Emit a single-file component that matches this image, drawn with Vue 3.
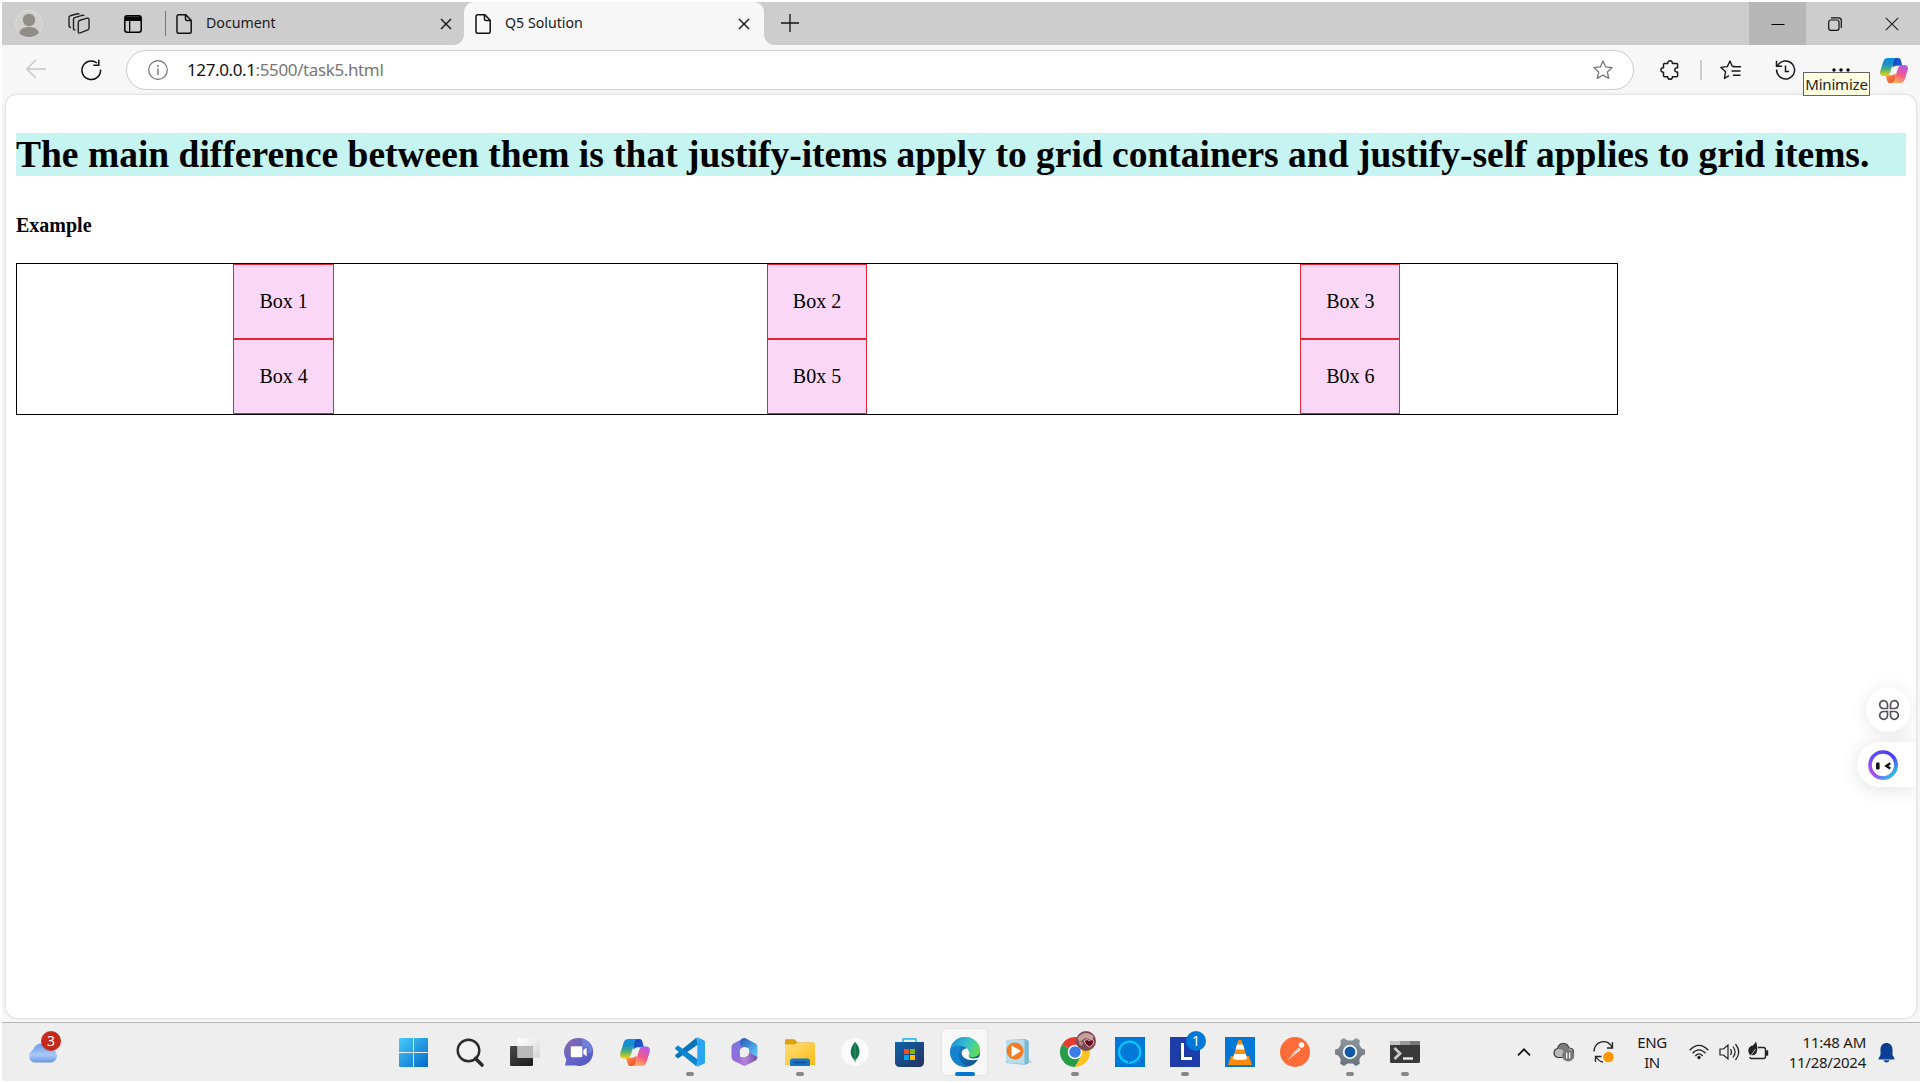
<script setup>
const boxes = ['Box 1', 'Box 2', 'Box 3', 'Box 4', 'B0x 5', 'B0x 6']
</script>

<template>
  <div class="screen">
    <svg class="defs" width="0" height="0" aria-hidden="true">
      <defs>
        <linearGradient id="cp-a" x1="0" y1="0" x2="0" y2="1">
          <stop offset="0" stop-color="#0d91e1" /><stop offset=".35" stop-color="#1b8fc9" /><stop offset=".65" stop-color="#52b471" /><stop offset="1" stop-color="#ffd000" />
        </linearGradient>
        <linearGradient id="cp-b" x1=".7" y1="0" x2=".3" y2="1">
          <stop offset="0" stop-color="#b45ae8" /><stop offset=".5" stop-color="#f2588d" /><stop offset="1" stop-color="#ffb357" />
        </linearGradient>
        <linearGradient id="cp-c" x1="0" y1="0" x2="1" y2="1">
          <stop offset="0" stop-color="#1b3fb5" /><stop offset="1" stop-color="#1668e0" />
        </linearGradient>
        <linearGradient id="cp-d" x1="0" y1="0" x2="1" y2="1">
          <stop offset="0" stop-color="#f9a13a" /><stop offset="1" stop-color="#ee3f3f" />
        </linearGradient>
        <symbol id="copilot" viewBox="0 0 30 27">
          <path d="M13 0h6.500c1.500 0 2.300.8 2.700 2.300L24 8.300h-5.500c-2.200 0-3.600.6-5 2.200z" fill="url(#cp-c)" />
          <path d="M17 27h-6.500c-1.500 0-2.300-.8-2.700-2.300L6 18.700h5.500c2.200 0 3.600-.6 5-2.200z" fill="url(#cp-d)" />
          <path d="M8.500 0H18c-2 .2-2.800 1.800-3.400 3.800L11 15.200c-.8 2.400-2 4.300-4.700 4.300H3.600C.6 19.500-.4 17 .3 14L3.700 3.500C4.500 1 6 0 8.500 0z" fill="url(#cp-a)" />
          <path d="M21.500 27H12c2-.2 2.800-1.800 3.400-3.800L19 11.800c.8-2.400 2-4.300 4.700-4.300h2.700c3 0 4 2.500 3.300 5.500L26.300 23.500C25.500 26 24 27 21.500 27z" fill="url(#cp-b)" />
        </symbol>
        <symbol id="doc" viewBox="0 0 16 20">
          <path d="M2.500.8h7.300l5.400 5.500v11.400a1.500 1.500 0 0 1-1.500 1.500H2.500A1.500 1.500 0 0 1 1 17.700V2.300A1.500 1.500 0 0 1 2.500.8zM9.500 1v4.200a1.300 1.300 0 0 0 1.300 1.300H15" fill="none" stroke="#111" stroke-width="1.500" />
        </symbol>
        <symbol id="cross" viewBox="0 0 12 12">
          <path d="M1 1l10 10M11 1L1 11" stroke="#111" stroke-width="1.400" />
        </symbol>
        <linearGradient id="win" gradientUnits="userSpaceOnUse" x1="0" y1="0" x2="29" y2="29"><stop offset="0" stop-color="#48cdfb" /><stop offset="1" stop-color="#0268c7" /></linearGradient>
        <linearGradient id="dark" x1="0" y1="0" x2="1" y2="1"><stop offset="0" stop-color="#484848" /><stop offset="1" stop-color="#1b1b1b" /></linearGradient>
        <linearGradient id="pale" x1="0" y1="0" x2="1" y2="1"><stop offset="0" stop-color="#fff" /><stop offset="1" stop-color="#d5d5d5" /></linearGradient>
        <linearGradient id="chat" x1="0" y1="0" x2="1" y2="1"><stop offset="0" stop-color="#8f6aa8" /><stop offset=".5" stop-color="#6264c7" /><stop offset="1" stop-color="#5558c8" /></linearGradient>
        <linearGradient id="off-a" x1="0" y1="1" x2="1" y2="0"><stop offset="0" stop-color="#9a68d8" /><stop offset="1" stop-color="#6a7fe0" /></linearGradient>
        <linearGradient id="off-b" x1="0" y1="0" x2="1" y2="1"><stop offset="0" stop-color="#2b54b8" /><stop offset="1" stop-color="#62d5ff" /></linearGradient>
        <linearGradient id="off-c" x1="0" y1="0" x2="1" y2="0"><stop offset="0" stop-color="#8a60cc" /><stop offset=".5" stop-color="#b484dc" /><stop offset="1" stop-color="#6c4aa3" /></linearGradient>
        <linearGradient id="folder" x1="0" y1="0" x2="1" y2="1"><stop offset="0" stop-color="#ffe07a" /><stop offset="1" stop-color="#fbb917" /></linearGradient>
        <linearGradient id="store" x1="0" y1="0" x2="1" y2="1"><stop offset="0" stop-color="#0f65ad" /><stop offset="1" stop-color="#272f5c" /></linearGradient>
        <linearGradient id="edge-top" x1="0" y1=".3" x2="1" y2=".6"><stop offset="0" stop-color="#1a8fd8" /><stop offset=".5" stop-color="#35bfd0" /><stop offset="1" stop-color="#62df4f" /></linearGradient>
        <linearGradient id="edge-low" x1="0" y1="0" x2="1" y2="1"><stop offset="0" stop-color="#1b92dc" /><stop offset="1" stop-color="#114a8b" /></linearGradient>
        <linearGradient id="gear" x1="0" y1="0" x2="0" y2="1"><stop offset="0" stop-color="#8f979d" /><stop offset="1" stop-color="#68727b" /></linearGradient>
        <linearGradient id="cloud" x1="0" y1="0" x2="0" y2="1"><stop offset="0" stop-color="#6f9ce8" /><stop offset=".6" stop-color="#a9c9f8" /><stop offset="1" stop-color="#6b95e4" /></linearGradient>
        <linearGradient id="ring" x1="1" y1="0" x2="0" y2="1"><stop offset="0" stop-color="#4a35f0" /><stop offset=".5" stop-color="#5b50ff" /><stop offset="1" stop-color="#c04be8" /></linearGradient>
        <linearGradient id="ring2" x1="0" y1="0" x2="1" y2="1"><stop offset=".55" stop-color="#2bc4e8" stop-opacity="0" /><stop offset=".9" stop-color="#26c0e6" /></linearGradient>
      </defs>
    </svg>

    <header class="tabs">
      <div class="slot avatar">
        <svg width="28" height="28" viewBox="0 0 28 28"><circle cx="14" cy="14" r="13.500" fill="#d2d0cd" stroke="#dedcd8" /><circle cx="14" cy="10" r="6.200" fill="#918d89" /><path d="M4 23c1-4 5-6 10-6s9 2 10 6c-5 5.500-15 5.500-20 0z" fill="#918d89" /></svg>
      </div>
      <div class="slot workspaces">
        <svg width="22" height="22" viewBox="0 0 22 22" fill="none" stroke="#222" stroke-width="1.400" stroke-linejoin="round"><path d="M11.500 7.500l7.500-2.300q2-.5 2 1.500v8.500q0 1.200-1.200 1.700l-7.500 3q-2 .7-2-1.200v-9.300q0-1.400 1.200-1.900z" /><path d="M7.500 17l-1-.1q-1-.2-1-1.200V6.300q0-1.300 1.200-1.700L14 2.300q1.500-.4 2 .8" /><path d="M3 14.500l-1-.2q-1-.2-1-1.200V4.500Q1 3.200 2.200 2.800L9.500.8q1.300-.3 1.800.6" /></svg>
      </div>
      <div class="slot vertical-tabs">
        <svg width="18" height="18" viewBox="0 0 18 18"><rect x=".8" y=".8" width="16.400" height="16.400" rx="2.500" fill="none" stroke="#000" stroke-width="1.500" /><path d="M1 1.500h16V6H1zM5 6h1.300v11H5z" /></svg>
      </div>
      <i class="rule"></i>
      <div class="tab">
        <svg width="16" height="20"><use href="#doc" /></svg><span class="t1">Document</span><svg class="x" width="12" height="12"><use href="#cross" /></svg>
      </div>
      <div class="tab active">
        <svg width="16" height="20"><use href="#doc" /></svg><span class="t2">Q5 Solution</span><svg class="x" width="12" height="12"><use href="#cross" /></svg>
      </div>
      <svg class="plus" width="18" height="18" viewBox="0 0 18 18"><path d="M9 0v18M0 9h18" stroke="#111" stroke-width="1.300" /></svg>
      <div class="win-buttons">
        <div class="min"><svg width="14" height="14"><path d="M.5 7.500h13" stroke="#000" /></svg></div>
        <div><svg width="14" height="14" fill="none" stroke="#111" stroke-width="1.200"><rect x=".7" y="3" width="10.300" height="10.300" rx="2" /><path d="M3 .8h7.500q2.800 0 2.800 2.700v7.500" /></svg></div>
        <div><svg width="14" height="14"><path d="M.8.8l12.400 12.400M13.200.8L.8 13.200" stroke="#222" stroke-width="1.200" /></svg></div>
      </div>
    </header>

    <div class="toolbar">
      <svg class="back" width="20" height="20" fill="none" stroke="#c6c6c6" stroke-width="1.400"><path d="M20 10H1M10 .8L.9 10l9.100 9.200" /></svg>
      <svg class="reload" width="22" height="22" viewBox="0 0 22 22" fill="none" stroke="#111" stroke-width="1.500"><path d="M20.500 10.500A9.300 9.300 0 1 1 17 4M18.800.8v5.500h-5.500" /></svg>
      <div class="address">
        <svg width="20" height="20"><circle cx="10" cy="10" r="9.300" fill="none" stroke="#707070" stroke-width="1.200" /><path d="M10 8.500v6.500" stroke="#666" stroke-width="1.300" /><circle cx="10" cy="6" r=".9" fill="#666" /></svg>
        <span class="url">127.0.0.1<em>:5500/task5.html</em></span>
        <svg class="star" width="20" height="20" viewBox="0 0 20 20"><path d="M10 1l2.700 5.900 6.400.7-4.800 4.300 1.400 6.500L10 15.100l-5.700 3.300 1.400-6.500L.9 7.600l6.400-.7z" fill="none" stroke="#777" stroke-width="1.300" stroke-linejoin="round" /></svg>
      </div>
      <svg class="puzzle" width="20" height="20" viewBox="0 0 20 20" fill="none" stroke="#1a1a1a" stroke-width="1.500" stroke-linejoin="round"><path d="M4.500 3.500h3.200c-.3-3.600 5-3.600 4.700 0h4.200q1 0 1 1v3.300c-3.700-.6-3.700 4.800 0 4.300v3.600q0 1-1 1h-4.200c.3 3.400-5 3.400-4.700 0H4.500q-1 0-1-1v-3.500c-3.500.3-3.500-4.800 0-4.400V4.500q0-1 1-1z" /></svg>
      <i class="rule2"></i>
      <svg class="favs" width="21" height="20" viewBox="0 0 21 20" fill="none" stroke="#1a1a1a" stroke-width="1.400" stroke-linejoin="round"><path d="M16 6.800l-3.800-.6L10 1 7.300 6.600l-6.400.8 4.700 4.300-1.200 6.600L9 15.700M13 6.800h8M11.500 11h9M13 15.200h7.500" /></svg>
      <svg class="history" width="21" height="20" viewBox="0 0 21 20" fill="none" stroke="#1a1a1a" stroke-width="1.500"><path d="M2.500 6A9 9 0 1 1 1.600 9.500M1.500.8v5.500H7M10.500 5.500v6H14" /></svg>
      <svg class="dots" width="18" height="4"><circle cx="2" cy="2" r="1.700" /><circle cx="9" cy="2" r="1.700" /><circle cx="16" cy="2" r="1.700" /></svg>
      <svg class="copilot" width="28" height="27"><use href="#copilot" /></svg>
      <div class="tooltip"><span>Minimize</span></div>
    </div>

    <div class="view">
      <main class="page">
        <h1><span>The main difference between them is that justify-items apply to grid containers and justify-self applies to grid items.</span></h1>
        <h4>Example</h4>
        <section class="grid"><div v-for="b in boxes" :key="b" class="box">{{ b }}</div></section>
        <div class="float-round">
          <svg width="20" height="20" fill="none" stroke="#55505c" stroke-width="1.700"><path d="M8.500 8.500H5A3.900 3.900 0 1 1 8.500 5zM11.500 8.500V5A3.900 3.900 0 1 1 15 8.500zM8.500 11.500V15A3.900 3.900 0 1 1 5 11.500zM11.500 11.500H15a3.900 3.900 0 1 1-3.500 3.500z" /></svg>
        </div>
        <div class="float-pill">
          <svg width="30" height="30" fill="none"><circle cx="15" cy="15" r="13" stroke="url(#ring)" stroke-width="3.600" /><circle cx="15" cy="15" r="13" stroke="url(#ring2)" stroke-width="3.600" /><rect x="8" y="12.500" width="3.600" height="7" rx="1.200" fill="#111" /><path d="M22.300 13.300l-4 2.700 4 2.500" stroke="#111" stroke-width="2.300" /></svg>
        </div>
      </main>
    </div>

    <footer class="taskbar">
      <div class="weather">
        <svg width="31" height="20" viewBox="0 0 31 20"><path d="M7 19.500a6.500 6.500 0 0 1-1-12.200C8-1 19-2 22 6c9-1 11.500 12 2 13.500z" fill="url(#cloud)" /><path d="M5 8c3-2 7-1.500 10 1.500 2-2 4-3.300 7-3.500" fill="none" stroke="#86aeee" stroke-width="1" /></svg>
        <b>3</b>
      </div>
      <nav class="apps">
        <div class="app first"><svg width="29" height="29"><path d="M0 1q0-1 1-1h13v14H0zM15 0h13q1 0 1 1v13H15zM0 15h14v14H1q-1 0-1-1zM15 15h14v13q0 1-1 1H15z" fill="url(#win)" /></svg></div>
        <div class="app"><svg width="28" height="29" fill="none" stroke="#2b2b2b"><circle cx="12.500" cy="12.500" r="10.800" fill="#f1f1f1" stroke-width="2.400" /><path d="M19.500 20.500l6.500 6.500" stroke-width="3.600" stroke-linecap="round" /></svg></div>
        <div class="app"><svg width="30" height="28"><rect y="8" width="23" height="20" rx="1.200" fill="url(#dark)" /><rect x="7.500" width="22.500" height="20" rx="1" fill="url(#pale)" /><path d="M7.500 8H23v12H7.500z" fill="#b9b9b9" /></svg></div>
        <div class="app"><svg class="nudge" width="29" height="28" viewBox="0 0 30 29"><path d="M15 0A14.500 14.500 0 1 1 12 28.500L1 28.500l1.400-6.200A14.500 14.500 0 0 1 15 0z" fill="url(#chat)" /><path d="M19 .6a14.500 14.500 0 0 1 10.500 13.200L25 16V9.500h-6z" fill="#7697ed" opacity=".6" /><rect x="7" y="8.500" width="12" height="11.500" rx="1" fill="#fff" /><path d="M20 12.500l3.500-2.600v9L20 16.500z" fill="#fff" /></svg></div>
        <div class="app"><svg width="30" height="27"><use href="#copilot" /></svg></div>
        <div class="app run"><svg width="30" height="30" viewBox="0 0 30 30"><path d="M3 21.500L.5 19.400q-.8-.8 0-1.600L21.500.5l1.500 7z" fill="#0873bb" /><path d="M3 8.500L.5 10.600q-.8.800 0 1.600L21.500 29.500l1.500-7z" fill="#0b86d0" /><path d="M22.300.2L29 3.200q1 .5 1 1.600v20.400q0 1.100-1 1.600l-6.700 3z" fill="#29a6f2" /></svg></div>
        <div class="app"><svg width="27" height="28" viewBox="0 0 27 28"><path d="M15 .3Q13.500-.4 12 .4L2.500 5.500Q.5 6.700.5 9v10q0 2.300 2 3.500l2.500 1.300L9 20v-8l6-4z" fill="url(#off-a)" /><path d="M14 0L24.500 5.500Q26.500 6.700 26.500 9v10.500L18 15v-4.500L9 7.500 9.500 3q.5-3 4.500-3z" fill="url(#off-b)" /><path d="M2.500 22.500l6.500-3.700 4.500.7 4.500-5.500 8.500 5q0 2.300-2 3.500L15 27.600q-1.500.8-3 0z" fill="url(#off-c)" /><circle cx="13.500" cy="14" r="4.800" fill="#eee" /></svg></div>
        <div class="app run"><svg width="30" height="27" viewBox="0 0 30 27"><path d="M0 1.500Q0 .3 1.200.3h8.500l3 3.200H29L28 8H0z" fill="#dda00f" /><path d="M0 5.500h9.500l3-1.800h16.500q1 0 1 1V26H0z" fill="url(#folder)" /><path d="M5 27v-5q0-2.500 2.500-2.500h15Q25 19.500 25 22v5z" fill="#1376c8" /><path d="M8.500 23.500h13" stroke="#0b4a8c" stroke-width="1.300" /></svg></div>
        <div class="app"><svg width="28" height="28"><circle cx="14" cy="14" r="13.800" fill="#fbfbfb" /><path d="M14 4c7 7 5 14 0 18.500C8.500 18 8 11 14 4z" fill="#10734b" /><path d="M14 4v20" stroke="#3c9167" /></svg></div>
        <div class="app"><svg width="29" height="29" viewBox="0 0 29 29"><path d="M8 6V1.500Q8 .8 8.700.8h11.600q.7 0 .7.700V6" fill="none" stroke="#35b8ee" stroke-width="1.700" /><path d="M0 4h29v20.500a4.500 4.500 0 0 1-4.500 4.500h-20A4.500 4.500 0 0 1 0 24.500z" fill="url(#store)" /><path d="M9 11h5v5H9z" fill="#f25022" /><path d="M15 11h5v5h-5z" fill="#7fba00" /><path d="M9 17h5v5H9z" fill="#00a4ef" /><path d="M15 17h5v5h-5z" fill="#ffb900" /></svg></div>
        <div class="app on"><svg width="30" height="30" viewBox="0 0 30 30"><circle cx="15" cy="15" r="15" fill="url(#edge-low)" /><path d="M.2 13C1.500 5 7.500 0 15 0c9 0 15 6.500 15 13 0 5-3.500 7.300-7.500 7.300-3 0-5.500-1-4-3.300 1.500-3-1-6.500-5-7.500C8.500 8 2.500 9 .2 13z" fill="url(#edge-top)" /><path d="M12 10.500c-6 5.500-3.500 15 5 19C9 30.500 2 25.500.5 17 1 10 7.500 8 12 10.500z" fill="#1683d2" /><path d="M17.500 11.500c-3.500-.5-6 2-5.700 5 .5 5.500 8 8.500 18.500 5.500v-2.500c-4 2.500-11.800 2.800-11.600-.8 0-1.200 1-1.800.7-3.500z" fill="#f7f7f7" /></svg></div>
        <div class="app"><svg class="nudge" width="28" height="26" viewBox="0 0 28 26"><path d="M20 24h7l-3-4z" fill="#ccc" /><path d="M1 1l19-1 4 2v22l-4 2-19-2z" fill="#8fc4dd" /><path d="M1 1h19v24L1 23.500z" fill="#b6dcec" /><path d="M20 0v25M22 1v24" stroke="#5ca5c8" stroke-width=".7" /><circle cx="10" cy="12" r="8.500" fill="#f47b20" /><path d="M6.500 6.500l9.500 5.500-9.500 6z" fill="#fff" /></svg></div>
        <div class="app run"><svg width="30" height="30" viewBox="0 0 30 30"><path d="M15 15L2 7.500A15 15 0 0 1 28 7.500z" fill="#e33b2e" /><path d="M15 15L2 7.500a15 15 0 0 0 13 22.500l6.500-11.500z" fill="#269b48" /><path d="M15 8h13.300A15 15 0 0 1 15 30l6.500-11.300z" fill="#fcc31e" /><circle cx="15" cy="15" r="7.300" fill="#fff" /><circle cx="15" cy="15" r="5.800" fill="#3b7de8" /></svg>
          <svg class="badge photo" width="20" height="20"><circle cx="10" cy="10" r="10" fill="#7b4c52" /><path d="M1.500 7q7-9 16-2l-1 4-7-2-6 4z" fill="#c9a2a0" /><path d="M8 9.500q4-2 5 0 4-2 5 1-1 4-4.500 5.500Q9 14 8 9.500z" fill="#6c0820" stroke="#e1bcbc" /><circle cx="5" cy="12.500" r="2" fill="#b8868a" /></svg></div>
        <div class="app"><svg width="30" height="30"><path d="M0 0h30v30H0z" fill="#0078d7" /><path d="M13 25.400A10.500 10.500 0 1 1 18 25l-2 .7q-1.500.4-2-.2" fill="none" stroke="#00caff" stroke-width="2.200" /></svg></div>
        <div class="app run"><div class="l-tile"><svg width="30" height="30"><path d="M12 7L8 23h14v-4h-8z" fill="#12406b" /><path d="M12.500 6v15.500H22" fill="none" stroke="#fff" stroke-width="3" /></svg></div><b class="badge one">1</b></div>
        <div class="app"><svg width="30" height="30" viewBox="0 0 30 30"><path d="M0 0h30v30H0z" fill="#0078d7" /><path d="M6 19h18l3 9H3z" fill="#ff8c0a" /><path d="M13.500 3h3l6.500 21q-8 3-16 0z" fill="#ff8c0a" /><path d="M12 7.500h6l1.500 5h-9zM9.200 17h11.600l1.400 5q-7 2-14.400 0z" fill="#fff" /></svg></div>
        <div class="app"><svg width="30" height="30"><circle cx="15" cy="15" r="15" fill="#ff6c37" /><path d="M7 23.500l7-8.500 5-4.500 1.500 2.500L14 18z" fill="#fff" /><circle cx="21.500" cy="8" r="2.800" fill="#fff" /><path d="M13 17.500l6-5.500M7.500 22.500L13 17" stroke="#ff6c37" stroke-width=".7" /></svg></div>
        <div class="app run"><svg width="30" height="28" viewBox="0 0 30 28"><path d="M5.500 2L9 0l3.500 2.500h5L21 0l3.800 2.200-.5 4.300 2.200 3.800 3.500 1.500v4.400l-3.500 1.500-2.200 3.800.5 4.300L21 28l-3.500-2.500h-5L9 28l-3.800-2.200.5-4.300-2.200-3.800L0 16.200v-4.400l3.500-1.500 2.200-3.800z" fill="url(#gear)" /><circle cx="15" cy="14" r="7.200" fill="#f7f7f7" /><circle cx="15" cy="14" r="5.400" fill="#1058a6" /></svg></div>
        <div class="app run"><svg width="30" height="22"><rect width="30" height="22" rx="1.500" fill="#3a3a3a" /><path d="M0 4V1.500Q0 0 1.500 0H10v4z" fill="#c5c5c5" /><path d="M10 0h10v4H10z" fill="#9a9a9a" /><path d="M20 0h8.500Q30 0 30 1.500V4H20z" fill="#777" /><path d="M4.500 7l5.500 5.500L4.500 18" fill="none" stroke="#c9c9c9" stroke-width="2.800" /><path d="M13 17.500h10" stroke="#eee" stroke-width="2.400" /></svg></div>
      </nav>
      <div class="tray">
        <svg class="chev" width="14" height="8"><path d="M1 7.300l6-6 6 6" fill="none" stroke="#111" stroke-width="1.700" /></svg>
        <svg class="od" width="22" height="20" viewBox="0 0 22 20"><path d="M5 15.500A4.600 4.600 0 0 1 4.500 6.500C6.500-.3 14.500.5 15.800 6c3.700-.3 5 2.500 4.500 5v4.500z" fill="#b9b9b9" stroke="#333" stroke-width="1.200" /><path d="M4.500 7q5-.5 8 4l3.500-4.500C14 1 7 .5 4.500 7z" fill="#7c7c7c" /><circle cx="15.200" cy="13.500" r="6" fill="#777" /><path d="M13.700 10.500v6M16.700 10.500v6" stroke="#fff" stroke-width="1.200" /></svg>
        <svg class="sync" width="22" height="22" fill="none" stroke="#222" stroke-width="1.300"><path d="M1 10.500A9.500 9.500 0 0 1 19.300 6.500M19.500 1v6H14M2.500 21v-5.500h6M3 16c2 3 4 4.500 7 5" /><circle cx="15.500" cy="16" r="5.300" fill="#ff9800" stroke="none" /></svg>
        <div class="lang"><span>ENG</span><span>IN</span></div>
        <svg class="wifi" width="20" height="16" fill="none" stroke="#222" stroke-width="1.300"><path d="M.7 6.300q9.300-9.800 18.600 0M3.500 9.300q6.500-7 13 0M6.300 12q3.700-4.200 7.400 0" /><circle cx="10" cy="13.500" r="1.700" fill="#222" stroke="none" /></svg>
        <svg class="snd" width="21" height="18" fill="none" stroke="#222" stroke-width="1.200"><path d="M1 6h3.500L9 2v14l-4.500-4H1zM11.500 6q2 3 0 6M14 3.500q4.200 5.500 0 11M16.500 1q6.500 8 0 16" /></svg>
        <svg class="bat" width="21" height="18" fill="none" stroke="#222" stroke-width="1.400"><path d="M10 4.500h5.500q2 0 2 2v7q0 2-2 2H3.500q-1.500 0-2-1.500" /><path d="M18.500 8h1v4h-1z" fill="#222" /><path d="M2 12C-1.500 7 1 3 5 2.500q1.500-1.500 3-4 2 6 1 9.500-1 5.500-7 4z" fill="#222" stroke="none" /><path d="M1.500 14.500l6-8.500" stroke="#eee" stroke-width=".8" /></svg>
        <div class="clock"><span class="time">11:48 AM</span><span class="date">11/28/2024</span></div>
        <svg class="bell" width="17" height="20" viewBox="0 0 17 20"><path d="M8.500 0C12 0 14.500 2.700 14.500 6.300V12l2 3.500q.4 1-.8 1H1.300q-1.200 0-.8-1l2-3.500V6.300C2.500 2.700 5 0 8.500 0zM5.500 17.300h6q-.7 2.200-3 2.200t-3-2.200z" fill="#0b3f94" /></svg>
      </div>
    </footer>
  </div>
</template>

<style>
body { margin: 0; background: #fff; overflow: hidden; }
</style>

<style scoped>
.screen { box-sizing: border-box; width: 1922px; height: 1083px; padding: 2px; display: flex; flex-direction: column; font-family: "Noto Sans", sans-serif; color: #1a1a1a; overflow: hidden; background: #fff; }
.defs { position: absolute; }
svg { display: block; flex: none; overflow: visible; }
span { white-space: nowrap; }
.tabs { height: 43px; flex: none; display: flex; align-items: center; background: #cdcdcd; }
.slot { display: flex; justify-content: center; flex: none; box-sizing: border-box; }
.avatar { width: 54px; }
.workspaces { width: 44px; padding-left: 1px; }
.vertical-tabs { width: 65px; padding-right: 5px; margin-right: 0; padding-left: 5px; }
.rule { width: 1px; height: 25px; background: #777; flex: none; }
.tab { display: flex; align-items: center; box-sizing: border-box; width: 298px; height: 43px; padding-left: 10px; flex: none; font-size: 14.2px; }
.tab span { margin-left: 14px; line-height: 20px; margin-top: -2px; }
.x { margin-left: auto; margin-right: 12px; margin-top: 1px; }
.tab.active { width: 300px; padding-left: 11px; background: #f7f7f7; border-radius: 10px 10px 0 0; position: relative; }
.active .x { margin-right: 14px; }
.active::before, .active::after { content: ""; position: absolute; bottom: 0; width: 10px; height: 10px; }
.active::before { left: -10px; background: radial-gradient(circle at 0 0, #cdcdcd 9.500px, #f7f7f7 10px); }
.active::after { right: -10px; background: radial-gradient(circle at 100% 0, #cdcdcd 9.500px, #f7f7f7 10px); }
.plus { margin-left: 17px; margin-top: -1px; }
.win-buttons { margin-left: auto; display: flex; height: 43px; }
.win-buttons div { width: 57px; display: flex; align-items: center; justify-content: center; }
.win-buttons .min { background: #b7b7b7; }
.toolbar { height: 50px; flex: none; background: #f7f7f7; display: flex; align-items: center; position: relative; }
.back { margin-left: 24px; margin-top: -2px; }
.reload { margin-left: 34px; }
.address { box-sizing: border-box; width: 1508px; height: 40px; margin-left: 24px; border: 1px solid #cdcdcd; border-radius: 20px; background: #fff; display: flex; align-items: center; flex: none; padding: 0 20px 0 21px; }
.url { margin-left: 19px; font-size: 17px; color: #111; margin-top: -1px; letter-spacing: -.38px; }
.url em { font-style: normal; color: #777; }
.star { margin-left: auto; }
.puzzle { margin-left: 26px; }
.rule2 { width: 2px; height: 20px; background: #ccc; margin-left: 20px; }
.favs { margin-left: 18px; }
.history { margin-left: 34px; }
.dots { margin-left: 36px; }
.copilot { margin-left: 30px; }
.tooltip { position: absolute; left: 1801px; top: 27px; width: 65px; height: 22px; border: 1px solid #646464; background: #ffffe1; display: flex; align-items: center; justify-content: center; font-size: 15px; color: #222; letter-spacing: -.2px; z-index: 2; }
.view { flex: none; height: 927px; box-sizing: border-box; background: #f7f7f7; padding: 0 4px 4px; }
.page { position: relative; box-sizing: border-box; height: 923px; background: #fff; border-radius: 11px; box-shadow: 0 0 3px rgba(0,0,0,.22); padding: 38px 10px 0; font-family: "Liberation Serif", serif; color: #000; overflow: hidden; }
h1 { margin: 0; height: 43px; line-height: 43px; font-size: 37.5px; background: #c5f4f1; }
h4 { margin: 38px 0 0; height: 23px; line-height: 23px; font-size: 20px; }
.grid { margin-top: 26px; width: 1600px; border: 1px solid #000; display: grid; grid-template-columns: repeat(3, 1fr); justify-items: center; }
.box { border: 1px solid #e32636; background: #fad7f6; padding: 25px; font-size: 20px; line-height: 23px; }
.float-round { position: absolute; right: 5px; top: 592px; width: 45px; height: 45px; border-radius: 50%; background: #fff; box-shadow: 0 2px 18px rgba(0,0,0,.1); display: flex; align-items: center; justify-content: center; }
.float-pill { position: absolute; right: 0; top: 647px; width: 59px; height: 45px; border-radius: 23px 0 0 23px; background: #fff; box-shadow: 0 2px 20px rgba(0,0,0,.12); display: flex; align-items: center; box-sizing: border-box; padding-left: 11px; }
.taskbar { height: 59px; flex: none; box-sizing: border-box; border-top: 1px solid #b6b6b6; background: #eee; display: flex; }
.weather { width: 385px; position: relative; padding: 20px 0 0 25px; box-sizing: border-box; flex: none; }
.weather b { position: absolute; left: 39px; top: 8px; width: 20px; height: 20px; border-radius: 50%; background: #c42b1c; color: #fff; font-weight: 400; font-size: 14px; line-height: 20px; text-align: center; }
.apps { display: flex; align-items: center; flex: none; }
.app { width: 55px; height: 48px; display: flex; align-items: center; justify-content: center; position: relative; }
.first svg, .nudge { margin-right: 2px; }
.run::after { content: ""; position: absolute; bottom: 0; left: 23.500px; width: 8px; height: 4px; border-radius: 2px; background: #868686; }
.on::before { content: ""; position: absolute; inset: 0 4px; background: #f8f8f8; border: 1px solid #e4e4e4; border-radius: 5px; box-sizing: border-box; }
.on svg { position: relative; }
.on::after { content: ""; position: absolute; bottom: 0; left: 17.500px; width: 20px; height: 4px; border-radius: 2px; background: #0078d4; }
.badge { position: absolute; left: 29px; top: 3px; }
.l-tile { background: #1e3dab; }
.one { width: 20px; height: 20px; border-radius: 50%; background: #0078d7; color: #fff; font-size: 14px; line-height: 20px; text-align: center; font-weight: 400; }
.tray { display: flex; align-items: center; flex: 1; }
.chev { margin-left: 85px; }
.od { margin-left: 22px; }
.sync { margin-left: 18px; }
.lang { display: flex; flex-direction: column; align-items: center; width: 34px; margin-left: 20px; margin-top: -1px; font-size: 15px; line-height: 20px; letter-spacing: -.4px; }
.wifi { margin-left: 20px; }
.snd { margin-left: 10px; }
.bat { margin-left: 8px; }
.clock { display: flex; flex-direction: column; align-items: flex-end; width: 84px; margin-left: 13px; margin-top: -1px; font-size: 15px; line-height: 20px; letter-spacing: -.25px; }
.bell { margin-left: 12px; margin-top: 2px; }
</style>
